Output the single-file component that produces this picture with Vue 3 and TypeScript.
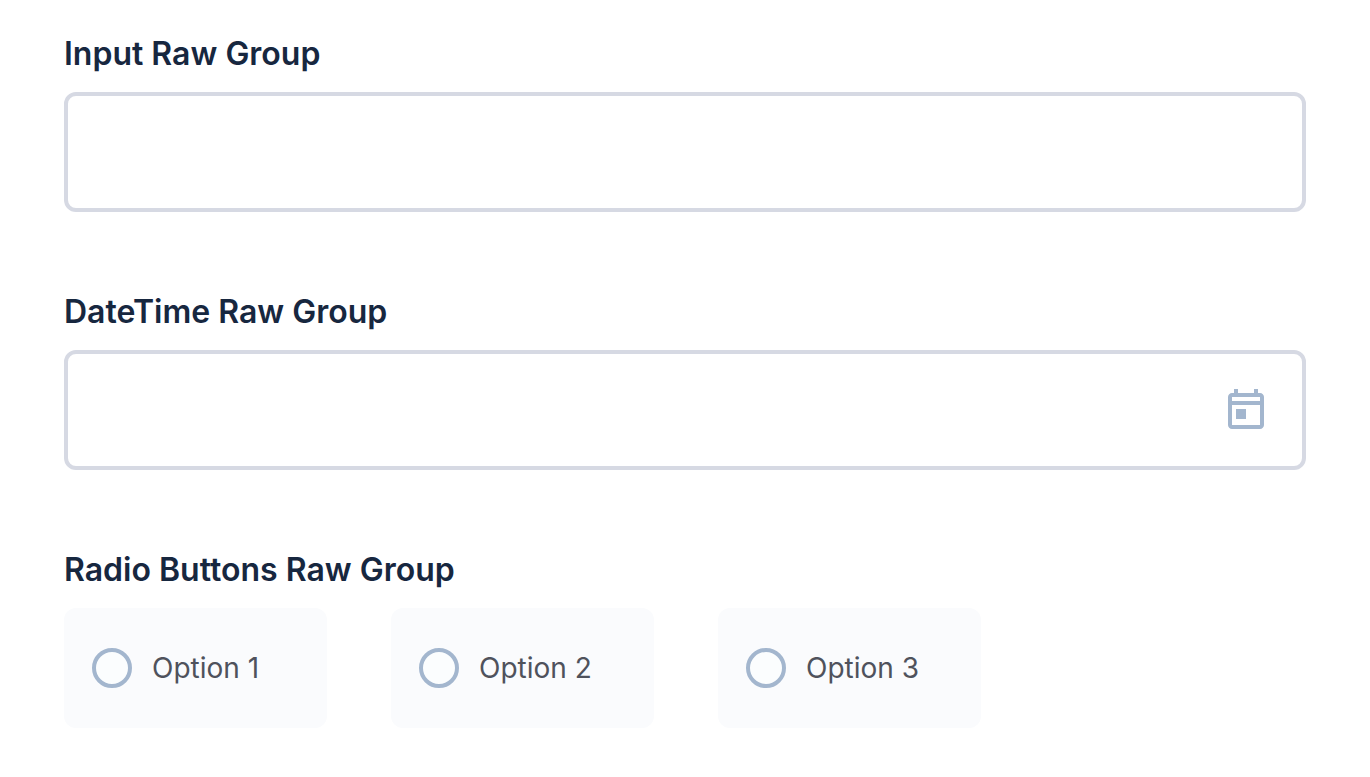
<script setup lang="ts">
import { ref } from 'vue'

const text = ref('')
const date = ref('')
const choice = ref('')
const options: string[] = ['Option 1', 'Option 2', 'Option 3']
</script>

<template>
  <form class="form" @submit.prevent>
    <div class="group">
      <label class="title" for="raw-input">Input Raw Group</label>
      <div class="field">
        <input id="raw-input" v-model="text" class="control" type="text" />
      </div>
    </div>

    <div class="group">
      <label class="title" for="raw-date">DateTime Raw Group</label>
      <div class="field">
        <input id="raw-date" v-model="date" class="control" type="text" />
        <button class="picker" type="button" aria-label="Open calendar">
          <svg viewBox="0 0 24 24" width="48" height="48" fill="currentColor" aria-hidden="true">
            <path d="M19 3.5h-1v-2h-2v2H8v-2H6v2H5c-1.1 0-2 .9-2 2v14c0 1.1.9 2 2 2h14c1.1 0 2-.9 2-2v-14c0-1.1-.9-2-2-2zm0 16H5v-10h14v10zm0-12H5v-2h14v2zM7 11.5h5v5H7z" />
          </svg>
        </button>
      </div>
    </div>

    <fieldset class="group">
      <legend class="title">Radio Buttons Raw Group</legend>
      <div class="options">
        <label v-for="option in options" :key="option" class="option">
          <input v-model="choice" class="radio" type="radio" name="raw-radio" :value="option" />
          <span>{{ option }}</span>
        </label>
      </div>
    </fieldset>
  </form>
</template>

<style>
body {
  margin: 0;
  background: #fff;
}
</style>

<style scoped>
.form {
  display: flex;
  flex-direction: column;
  gap: 80px;
  padding: 34px 64px 48px;
  font-family: Inter, "Liberation Sans", sans-serif;
  font-optical-sizing: none;
}
.group {
  min-width: 0;
  margin: 0;
  padding: 0;
  border: 0;
}
.title {
  display: block;
  padding: 0 0 18px;
  color: #17273f;
  font-size: 32px;
  font-weight: 600;
  line-height: 40px;
}
.field {
  display: flex;
  align-items: center;
  box-sizing: border-box;
  height: 120px;
  border: 4px solid #d6d9e3;
  border-radius: 12px;
  background: #fff;
}
.control {
  flex: 1;
  min-width: 0;
  height: 100%;
  box-sizing: border-box;
  padding: 0 24px;
  border: 0;
  outline: 0;
  background: transparent;
  color: #4f525c;
  font: 400 28px/40px Inter, "Liberation Sans", sans-serif;
}
.picker {
  display: flex;
  margin: 0 32px 0 0;
  padding: 0;
  border: 0;
  background: none;
  color: #a3b6ce;
  cursor: pointer;
}
.options {
  display: flex;
  flex-wrap: wrap;
  gap: 64px;
}
.option {
  display: flex;
  align-items: center;
  gap: 20px;
  box-sizing: border-box;
  width: 263px;
  height: 120px;
  padding: 0 28px;
  border-radius: 12px;
  background: #fafbfd;
  color: #4f525c;
  font-size: 28px;
  font-weight: 400;
  line-height: 40px;
  cursor: pointer;
}
.radio {
  appearance: none;
  box-sizing: border-box;
  flex: none;
  width: 40px;
  height: 40px;
  margin: 0;
  border: 4px solid #a3b6ce;
  border-radius: 50%;
  background: #fbfdfe;
  cursor: pointer;
}
.radio:checked {
  border-width: 12px;
}
</style>
